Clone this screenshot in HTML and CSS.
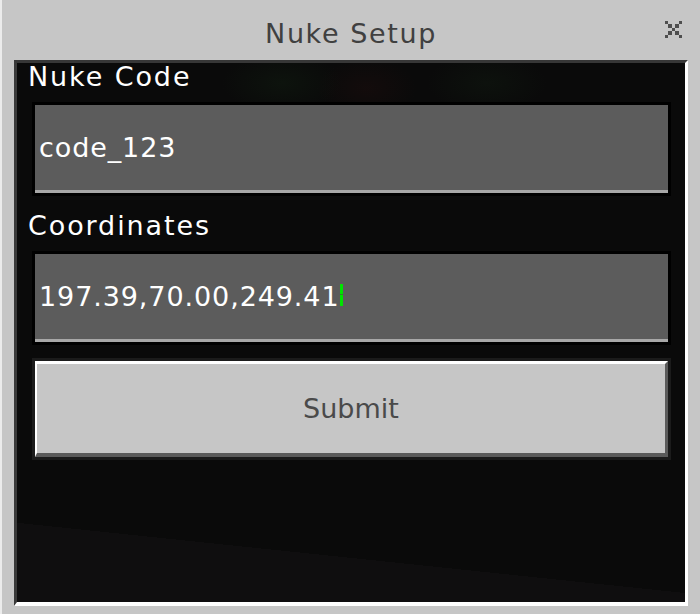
FILE: index.html
```html
<!DOCTYPE html>
<html lang="en">
<head>
<meta charset="utf-8">
<title>Nuke Setup</title>
<link rel="stylesheet" href="styles.css">
</head>
<body>
<div class="window">
  <header class="titlebar">
    <span class="spacer"></span>
    <h1 class="title">Nuke Setup</h1>
    <button class="close" aria-label="Close">
      <svg width="17" height="17" viewBox="0 0 5 5" shape-rendering="crispEdges">
        <rect x="0" y="0" width="1" height="1"/>
        <rect x="4" y="0" width="1" height="1"/>
        <rect x="1" y="1" width="1" height="1"/>
        <rect x="3" y="1" width="1" height="1"/>
        <rect x="2" y="2" width="1" height="1"/>
        <rect x="1" y="3" width="1" height="1"/>
        <rect x="3" y="3" width="1" height="1"/>
        <rect x="0" y="4" width="1" height="1"/>
        <rect x="4" y="4" width="1" height="1"/>
      </svg>
    </button>
  </header>
  <main class="panel">
    <label class="label">Nuke Code</label>
    <div class="field"><div class="field-inner">code_123</div></div>
    <label class="label label-second">Coordinates</label>
    <div class="field"><div class="field-inner">197.39,70.00,249.41<span class="cursor"></span></div></div>
    <div class="button-frame"><div class="button">Submit</div></div>
  </main>
</div>
</body>
</html>
```
FILE: styles.css
```css
html, body {
  margin: 0;
  padding: 0;
}
body {
  background: #c6c6c6;
  font-family: "DejaVu Sans", "Liberation Sans", sans-serif;
  font-size: 27px;
  line-height: 28px;
  letter-spacing: 1.9px;
}
.window {
  width: 700px;
  height: 614px;
  box-sizing: border-box;
  border-left: 2px solid #ececec;
  padding-left: 12px;
  background: #c6c6c6;
}
.titlebar {
  height: 60px;
  box-sizing: border-box;
  padding: 20px 18px 0 0;
  display: grid;
  grid-template-columns: 1fr auto 1fr;
  align-items: start;
}
.title {
  margin: 0;
  font-size: 27px;
  font-weight: normal;
  line-height: 28px;
  color: #404040;
  letter-spacing: 1.6px;
  margin-left: 6px;
}
.close {
  justify-self: end;
  margin-top: 1px;
  padding: 0;
  border: 0;
  background: none;
  display: block;
  width: 17px;
  height: 17px;
  fill: #4e4e4e;
}
.close svg {
  display: block;
}
.panel {
  width: 674px;
  height: 546px;
  box-sizing: border-box;
  border-top: 3px solid #373737;
  border-left: 3px solid #3a3a3a;
  border-right: 3px solid #ffffff;
  border-bottom: 4px solid #ffffff;
  padding: 0 14px 0 11px;
  display: flex;
  flex-direction: column;
  background:
    radial-gradient(ellipse 60px 30px at 265px 20px, rgba(20, 40, 20, 0.3), transparent),
    radial-gradient(ellipse 50px 30px at 350px 25px, rgba(40, 15, 15, 0.3), transparent),
    radial-gradient(ellipse 60px 30px at 470px 20px, rgba(20, 35, 20, 0.3), transparent),
    linear-gradient(186deg, transparent 87%, #0f0e0f 87%),
    #0a0a0a;
}
.label {
  display: block;
  color: #ffffff;
  line-height: 28px;
  height: 28px;
}
.label-second {
  margin-top: 16px;
}
.field {
  margin: 11px 0 0 4px;
  background: #000000;
  padding: 3px;
}
.field-inner {
  height: 88px;
  box-sizing: border-box;
  background: #5c5c5c;
  border-bottom: 3px solid #a8a8a8;
  display: flex;
  align-items: center;
  padding-left: 4px;
  color: #ffffff;
  white-space: pre;
  letter-spacing: 0.9px;
}
.cursor {
  display: inline-block;
  width: 3px;
  height: 22px;
  margin-left: 0;
  align-self: center;
  margin-top: -4px;
  background: linear-gradient(#00e400 0 44%, #2a8a2a 44% 52%, #00e400 52% 100%);
}
.button-frame {
  margin: 13px 0 0 4px;
  background: #1b1b1b;
  padding: 3px;
}
.button {
  height: 96px;
  box-sizing: border-box;
  background: #c6c6c6;
  border-top: 3px solid #ffffff;
  border-left: 2px solid #ffffff;
  border-right: 3px solid #5a5a5a;
  border-bottom: 4px solid #5a5a5a;
  display: flex;
  align-items: center;
  justify-content: center;
  color: #4a4a4a;
  letter-spacing: 0;
  padding-top: 0;
}
```
